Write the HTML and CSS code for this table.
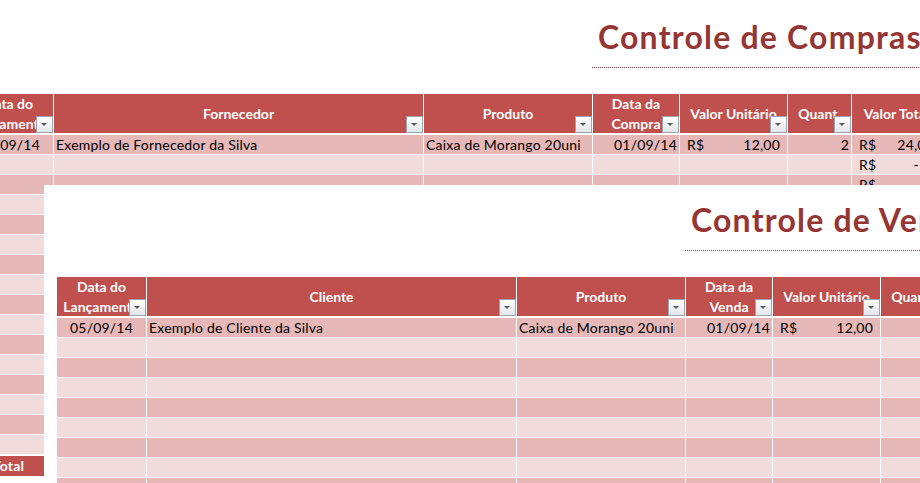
FILE: index.html
```html
<!DOCTYPE html>
<html lang="pt-BR">
<head>
<meta charset="utf-8">
<title>Controle de Compras e Vendas</title>
<link rel="stylesheet" href="styles.css">
</head>
<body>
<div class="sheet sheet-back">
  <div class="title-cell">
    <h1 class="title">Controle de Compras</h1>
    <div class="rule"></div>
  </div>
  <div class="grid grid-back">
    <div class="hdr"><span class="hdr-text">Data do<br>Lançamento</span><span class="filter"></span></div>
    <div class="hdr"><span class="hdr-text">Fornecedor</span><span class="filter"></span></div>
    <div class="hdr"><span class="hdr-text">Produto</span><span class="filter"></span></div>
    <div class="hdr"><span class="hdr-text">Data da<br>Compra</span><span class="filter"></span></div>
    <div class="hdr"><span class="hdr-text">Valor Unitário</span><span class="filter"></span></div>
    <div class="hdr"><span class="hdr-text">Quant.</span><span class="filter"></span></div>
    <div class="hdr"><span class="hdr-text">Valor Total</span><span class="filter"></span></div>

    <div class="row dark"><div class="c ctr">05/09/14</div><div class="c">Exemplo de Fornecedor da Silva</div><div class="c">Caixa de Morango 20uni</div><div class="c num">01/09/14</div><div class="c acc"><span>R$</span><span>12,00</span></div><div class="c num">2</div><div class="c acc"><span>R$</span><span>24,00</span></div></div>
    <div class="row light"><div class="c"></div><div class="c"></div><div class="c"></div><div class="c"></div><div class="c"></div><div class="c"></div><div class="c acc"><span>R$</span><span class="z">-</span></div></div>
    <div class="row dark"><div class="c"></div><div class="c"></div><div class="c"></div><div class="c"></div><div class="c"></div><div class="c"></div><div class="c acc"><span>R$</span><span class="z">-</span></div></div>
    <div class="row light"><div class="c"></div><div class="c"></div><div class="c"></div><div class="c"></div><div class="c"></div><div class="c"></div><div class="c acc"><span>R$</span><span class="z">-</span></div></div>
    <div class="row dark"><div class="c"></div><div class="c"></div><div class="c"></div><div class="c"></div><div class="c"></div><div class="c"></div><div class="c acc"><span>R$</span><span class="z">-</span></div></div>
    <div class="row light"><div class="c"></div><div class="c"></div><div class="c"></div><div class="c"></div><div class="c"></div><div class="c"></div><div class="c acc"><span>R$</span><span class="z">-</span></div></div>
    <div class="row dark"><div class="c"></div><div class="c"></div><div class="c"></div><div class="c"></div><div class="c"></div><div class="c"></div><div class="c acc"><span>R$</span><span class="z">-</span></div></div>
    <div class="row light"><div class="c"></div><div class="c"></div><div class="c"></div><div class="c"></div><div class="c"></div><div class="c"></div><div class="c acc"><span>R$</span><span class="z">-</span></div></div>
    <div class="row dark"><div class="c"></div><div class="c"></div><div class="c"></div><div class="c"></div><div class="c"></div><div class="c"></div><div class="c acc"><span>R$</span><span class="z">-</span></div></div>
    <div class="row light"><div class="c"></div><div class="c"></div><div class="c"></div><div class="c"></div><div class="c"></div><div class="c"></div><div class="c acc"><span>R$</span><span class="z">-</span></div></div>
    <div class="row dark"><div class="c"></div><div class="c"></div><div class="c"></div><div class="c"></div><div class="c"></div><div class="c"></div><div class="c acc"><span>R$</span><span class="z">-</span></div></div>
    <div class="row light"><div class="c"></div><div class="c"></div><div class="c"></div><div class="c"></div><div class="c"></div><div class="c"></div><div class="c acc"><span>R$</span><span class="z">-</span></div></div>
    <div class="row dark"><div class="c"></div><div class="c"></div><div class="c"></div><div class="c"></div><div class="c"></div><div class="c"></div><div class="c acc"><span>R$</span><span class="z">-</span></div></div>
    <div class="row light"><div class="c"></div><div class="c"></div><div class="c"></div><div class="c"></div><div class="c"></div><div class="c"></div><div class="c acc"><span>R$</span><span class="z">-</span></div></div>
    <div class="row dark"><div class="c"></div><div class="c"></div><div class="c"></div><div class="c"></div><div class="c"></div><div class="c"></div><div class="c acc"><span>R$</span><span class="z">-</span></div></div>
    <div class="row light"><div class="c"></div><div class="c"></div><div class="c"></div><div class="c"></div><div class="c"></div><div class="c"></div><div class="c acc"><span>R$</span><span class="z">-</span></div></div>
    <div class="row total"><div class="c ctr">Total</div><div class="c"></div><div class="c"></div><div class="c"></div><div class="c"></div><div class="c"></div><div class="c acc"><span>R$</span><span>24,00</span></div></div>
  </div>
</div>

<div class="window">
  <div class="sheet sheet-front">
    <div class="title-cell">
      <h1 class="title">Controle de Vendas</h1>
      <div class="rule"></div>
    </div>
    <div class="grid">
      <div class="hdr"><span class="hdr-text">Data do<br>Lançamento</span><span class="filter"></span></div>
      <div class="hdr"><span class="hdr-text">Cliente</span><span class="filter"></span></div>
      <div class="hdr"><span class="hdr-text">Produto</span><span class="filter"></span></div>
      <div class="hdr"><span class="hdr-text">Data da<br>Venda</span><span class="filter"></span></div>
      <div class="hdr"><span class="hdr-text">Valor Unitário</span><span class="filter"></span></div>
      <div class="hdr"><span class="hdr-text">Quant.</span><span class="filter"></span></div>
      <div class="hdr"><span class="hdr-text">Valor Total</span><span class="filter"></span></div>

      <div class="row dark"><div class="c ctr">05/09/14</div><div class="c">Exemplo de Cliente da Silva</div><div class="c">Caixa de Morango 20uni</div><div class="c num">01/09/14</div><div class="c acc"><span>R$</span><span>12,00</span></div><div class="c num">2</div><div class="c acc"><span>R$</span><span>24,00</span></div></div>
      <div class="row light"><div class="c"></div><div class="c"></div><div class="c"></div><div class="c"></div><div class="c"></div><div class="c"></div><div class="c"></div></div>
      <div class="row dark"><div class="c"></div><div class="c"></div><div class="c"></div><div class="c"></div><div class="c"></div><div class="c"></div><div class="c"></div></div>
      <div class="row light"><div class="c"></div><div class="c"></div><div class="c"></div><div class="c"></div><div class="c"></div><div class="c"></div><div class="c"></div></div>
      <div class="row dark"><div class="c"></div><div class="c"></div><div class="c"></div><div class="c"></div><div class="c"></div><div class="c"></div><div class="c"></div></div>
      <div class="row light"><div class="c"></div><div class="c"></div><div class="c"></div><div class="c"></div><div class="c"></div><div class="c"></div><div class="c"></div></div>
      <div class="row dark"><div class="c"></div><div class="c"></div><div class="c"></div><div class="c"></div><div class="c"></div><div class="c"></div><div class="c"></div></div>
      <div class="row light"><div class="c"></div><div class="c"></div><div class="c"></div><div class="c"></div><div class="c"></div><div class="c"></div><div class="c"></div></div>
      <div class="row dark"><div class="c"></div><div class="c"></div><div class="c"></div><div class="c"></div><div class="c"></div><div class="c"></div><div class="c"></div></div>
      <div class="row light"><div class="c"></div><div class="c"></div><div class="c"></div><div class="c"></div><div class="c"></div><div class="c"></div><div class="c"></div></div>
    </div>
  </div>
</div>
</body>
</html>
```

FILE: styles.css
```css
html, body {
  margin: 0;
  padding: 0;
  width: 920px;
  height: 483px;
  overflow: hidden;
  background: #ffffff;
}

body {
  position: relative;
  font-family: Lato, "Open Sans", sans-serif;
  color: #000000;
}

.sheet {
  width: 1100px;
}

.sheet-back {
  margin-left: -36px;
}

.title-cell {
  margin-left: 628px;
  padding-top: 21px;
  margin-bottom: 26px;
}

.title {
  margin: 0 0 0 6px;
  height: 46px;
  font-size: 32px;
  line-height: 32px;
  font-weight: 700;
  letter-spacing: 1.2px;
  color: #963634;
  white-space: nowrap;
}

.rule {
  height: 1px;
  background: repeating-linear-gradient(to right, #963634 0 1px, transparent 1px 2px);
}

.grid {
  display: grid;
  grid-template-columns: 89px 369px 168px 86px 107px 63px 89px;
  grid-template-rows: 40px;
  grid-auto-rows: 19px;
  column-gap: 1px;
  row-gap: 1px;
}

.grid-back {
  grid-template-rows: 40px repeat(16, 19px) 21px;
}

.hdr {
  position: relative;
  align-self: start;
  height: 39px;
  background: #C0504D;
  color: #ffffff;
  font-size: 14px;
  font-weight: 700;
  line-height: 20px;
  display: flex;
  align-items: center;
  justify-content: center;
  text-align: center;
  white-space: nowrap;
  overflow: hidden;
}

.filter {
  position: absolute;
  right: 0;
  bottom: 0;
  width: 17px;
  height: 17px;
  box-sizing: border-box;
  border: 1px solid #9DA5AF;
  background: linear-gradient(#ffffff, #E3E6EB);
}

.filter::after {
  content: "";
  position: absolute;
  left: 4px;
  top: 6px;
  border-left: 3.5px solid transparent;
  border-right: 3.5px solid transparent;
  border-top: 3.5px solid #5A5A5A;
}

.row {
  display: contents;
}

.c {
  font-size: 14px;
  line-height: 19px;
  letter-spacing: 0.2px;
  padding: 0 2px;
  white-space: nowrap;
  overflow: hidden;
}

.dark > .c {
  background: #E6B8B7;
}

.light > .c {
  background: #F2DCDB;
}

.total > .c {
  background: #C0504D;
  color: #ffffff;
  font-weight: 700;
  margin-top: 1px;
  height: 20px;
}

.ctr {
  text-align: center;
}

.num {
  text-align: right;
}

.acc {
  display: flex;
  justify-content: space-between;
  padding: 0 7px;
}

.z {
  padding-right: 15px;
}

.window {
  position: absolute;
  left: 44px;
  top: 185px;
  right: 0;
  bottom: 0;
  background: #ffffff;
  overflow: hidden;
}

.sheet-front {
  margin-top: -2px;
  margin-left: 13px;
}
```
